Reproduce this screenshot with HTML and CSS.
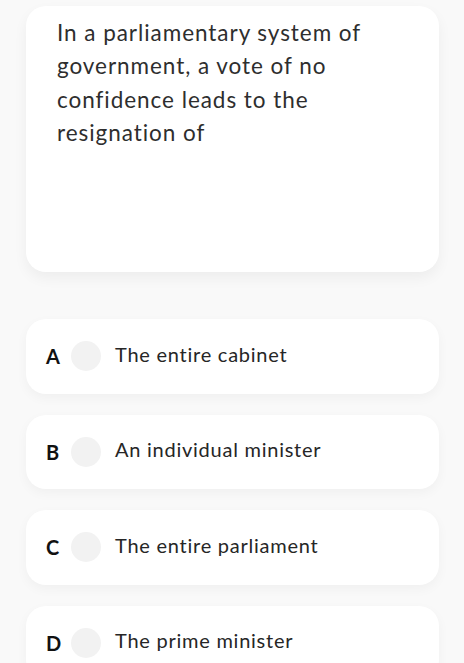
FILE: index.html
```html
<!DOCTYPE html>
<html lang="en">
  <head>
    <meta charset="UTF-8" />
    <meta name="viewport" content="width=device-width, initial-scale=1.0" />
    <link rel="stylesheet" href="styles.css">
    <title>Quiz</title>
  </head>
  <body>
    <div class="question-card">
      <p class="question">
        In a parliamentary system of government, a vote of no confidence leads to the resignation of
      </p>
    </div>

    <ul class="options">
      <li class="option">
        <span class="letter">A</span>
        <span class="radio"></span>
        <span class="answer">The entire cabinet</span>
      </li>
      <li class="option">
        <span class="letter">B</span>
        <span class="radio"></span>
        <span class="answer">An individual minister</span>
      </li>
      <li class="option">
        <span class="letter">C</span>
        <span class="radio"></span>
        <span class="answer">The entire parliament</span>
      </li>
      <li class="option">
        <span class="letter">D</span>
        <span class="radio"></span>
        <span class="answer">The prime minister</span>
      </li>
    </ul>
  </body>
</html>
```

FILE: styles.css
```css
* {
  box-sizing: border-box;
}

body {
  background-color: #f9f9f9;
  margin: 0;
  padding: 6px 25px 0 26px;
  font-family: Lato, "Open Sans", sans-serif;
  color: #222;
}

.question-card {
  background-color: #fff;
  border-radius: 20px;
  height: 266px;
  padding: 10px 40px 0 31px;
  box-shadow: 0 6px 14px rgba(0, 0, 0, 0.05);
}

.question {
  margin: 0;
  font-size: 22.5px;
  line-height: 33.3px;
  letter-spacing: 0.95px;
  color: #2e2e2e;
}

.options {
  list-style: none;
  margin: 47px 0 0;
  padding: 0;
  display: flex;
  flex-direction: column;
  gap: 21px;
}

.option {
  background-color: #fff;
  border-radius: 20px;
  height: 74.5px;
  display: flex;
  align-items: center;
  padding-left: 20px;
  box-shadow: 0 4px 12px rgba(0, 0, 0, 0.04);
}

.letter {
  width: 25px;
  font-size: 20px;
  font-weight: 700;
  color: #111;
}

.radio {
  width: 30px;
  height: 30px;
  border-radius: 50%;
  background-color: #f2f2f2;
  margin-right: 14px;
}

.answer {
  font-size: 20px;
  letter-spacing: 0.75px;
  margin-bottom: 5px;
  color: #262626;
}
```
